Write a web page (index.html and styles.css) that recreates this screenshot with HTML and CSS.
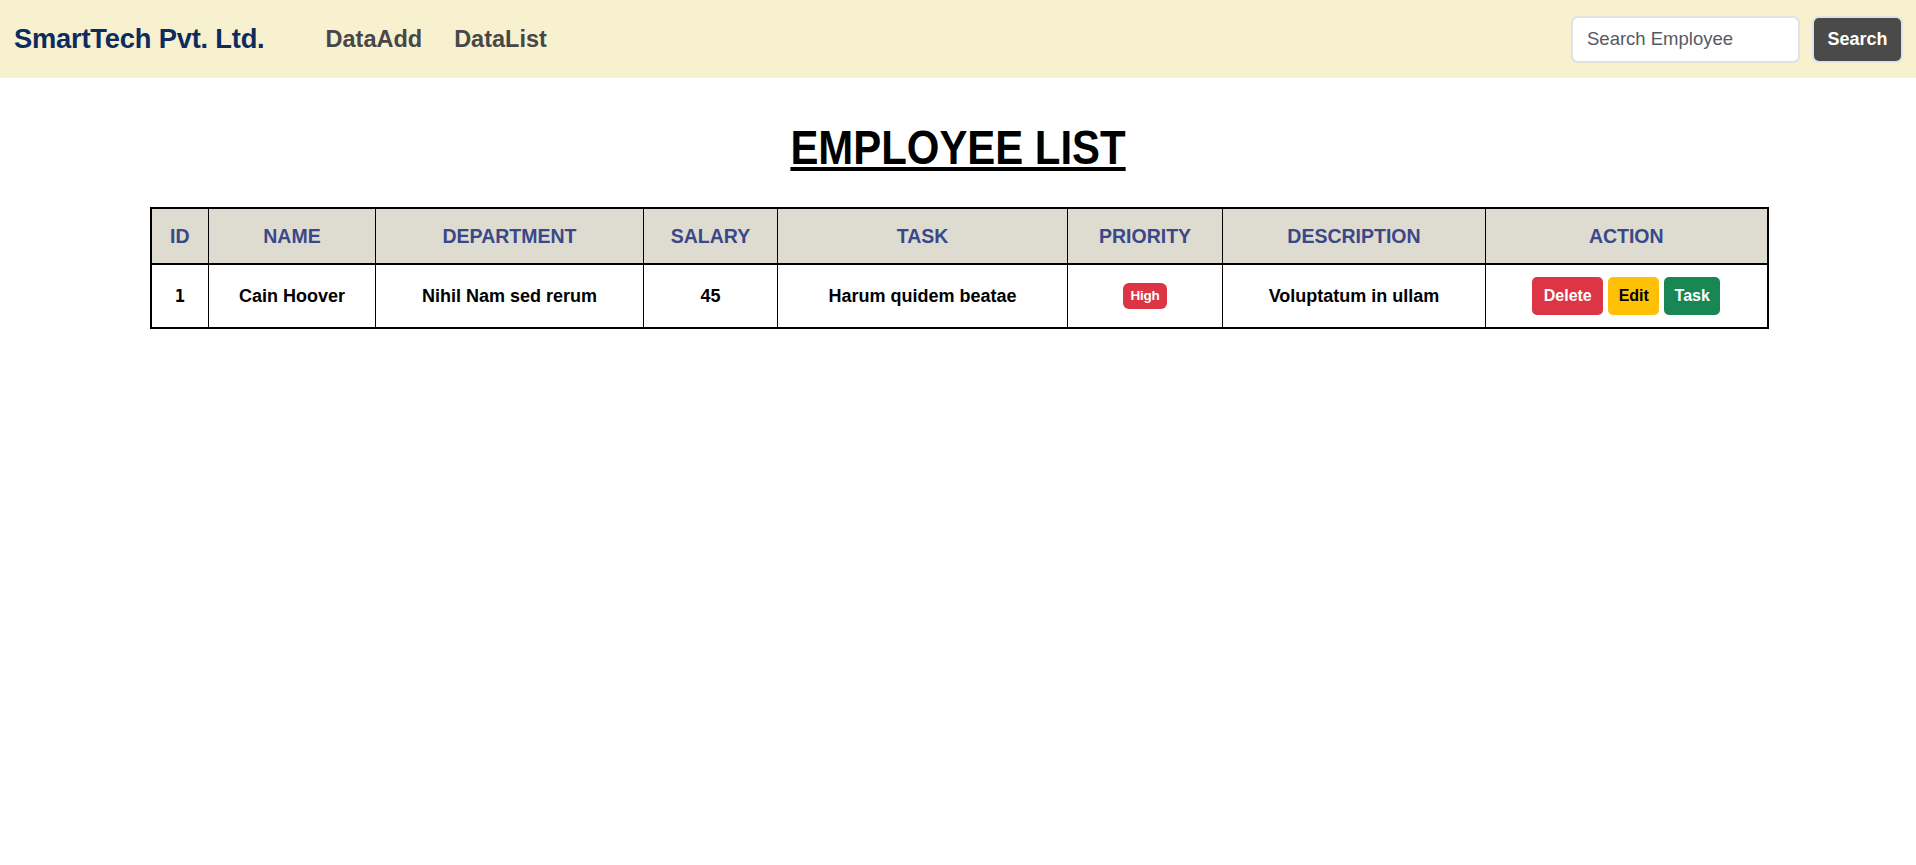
FILE: index.html
```html
<!DOCTYPE html>
<html lang="en">
<head>
<meta charset="utf-8">
<title>Employee List</title>
<link rel="stylesheet" href="styles.css">
</head>
<body>
<nav class="navbar">
  <div class="nav-left">
    <a class="brand" href="#">SmartTech Pvt. Ltd.</a>
    <ul class="nav-links">
      <li><a class="nav-link" href="#">DataAdd</a></li>
      <li><a class="nav-link" href="#">DataList</a></li>
    </ul>
  </div>
  <form class="search">
    <input class="search-input" type="text" placeholder="Search Employee">
    <button class="search-btn" type="button">Search</button>
  </form>
</nav>
<main class="content">
  <h1 class="title"><span class="title-text">EMPLOYEE LIST</span></h1>
  <table class="emp-table">
    <colgroup>
      <col class="c-id"><col class="c-name"><col class="c-dept"><col class="c-sal">
      <col class="c-task"><col class="c-pri"><col class="c-desc"><col class="c-act">
    </colgroup>
    <thead>
      <tr>
        <th>ID</th><th>NAME</th><th>DEPARTMENT</th><th>SALARY</th>
        <th>TASK</th><th>PRIORITY</th><th>DESCRIPTION</th><th>ACTION</th>
      </tr>
    </thead>
    <tbody>
      <tr>
        <td class="id">1</td>
        <td>Cain Hoover</td>
        <td>Nihil Nam sed rerum</td>
        <td>45</td>
        <td>Harum quidem beatae</td>
        <td><span class="badge">High</span></td>
        <td>Voluptatum in ullam</td>
        <td>
          <div class="actions">
            <button class="btn btn-delete" type="button">Delete</button>
            <button class="btn btn-edit" type="button">Edit</button>
            <button class="btn btn-task" type="button">Task</button>
          </div>
        </td>
      </tr>
    </tbody>
  </table>
</main>
</body>
</html>
```
FILE: styles.css
```css
* { box-sizing: border-box; }
body {
  margin: 0;
  font-family: "Liberation Sans", Arial, sans-serif;
  background: #fff;
  color: #000;
}
.navbar {
  height: 78px;
  background: #f7f1cf;
  display: flex;
  align-items: center;
  justify-content: space-between;
  padding: 0 13px 0 14px;
}
.nav-left {
  display: flex;
  align-items: center;
}
.brand {
  font-weight: bold;
  font-size: 27.3px;
  color: #0c2b5e;
  text-decoration: none;
  letter-spacing: -0.2px;
}
.nav-links {
  list-style: none;
  display: flex;
  gap: 32px;
  margin: 0 0 0 61px;
  padding: 0;
}
.nav-link {
  font-weight: bold;
  font-size: 23.5px;
  color: #474747;
  text-decoration: none;
}
.search {
  display: flex;
  gap: 12px;
  margin: 0;
}
.search-input {
  width: 229px;
  height: 47px;
  border: 2px solid #dfe2e6;
  border-radius: 7px;
  padding: 0 14px;
  font-family: "Liberation Sans", Arial, sans-serif;
  font-size: 18.5px;
  background: #fff;
}
.search-input::placeholder { color: #555a62; opacity: 1; }
.search-btn {
  width: 91px;
  height: 47px;
  border: 2px solid #dfe2e6;
  border-radius: 7px;
  background: #4a4a48;
  color: #fff;
  font-family: "Liberation Sans", Arial, sans-serif;
  font-weight: bold;
  font-size: 18px;
  padding: 0;
}
.content {
  display: flex;
  flex-direction: column;
  align-items: center;
}
.title {
  margin: 39px 0 30px;
  font-weight: bold;
  font-size: 49px;
  line-height: 60px;
}
.title-text {
  display: inline-block;
  transform: scaleX(0.855);
  text-decoration: underline;
  text-decoration-thickness: 4px;
  text-underline-offset: 3px;
}
.emp-table {
  width: 1617px;
  table-layout: fixed;
  border-collapse: collapse;
  border: 2px solid #000;
  text-align: center;
  margin-left: 2px;
}
.c-id { width: 58px; }
.c-name { width: 167px; }
.c-dept { width: 268px; }
.c-sal { width: 134px; }
.c-task { width: 290px; }
.c-pri { width: 155px; }
.c-desc { width: 263px; }
.c-act { width: 282px; }
.emp-table th,
.emp-table td {
  border: 1px solid #000;
  font-weight: bold;
  vertical-align: middle;
}
.emp-table th {
  background: #dedbd0;
  color: #3a4889;
  font-size: 19.5px;
  height: 56px;
  padding: 0 6px;
  border-bottom: 2px solid #000;
}
.emp-table td {
  font-size: 18px;
  height: 64px;
  padding: 0 6px;
}
.emp-table td.id { font-family: "DejaVu Sans Mono", monospace; font-size: 17px; }
.badge {
  display: inline-block;
  background: #dc3545;
  color: #fff;
  font-size: 13.5px;
  font-weight: bold;
  padding: 0 8px;
  height: 26px;
  line-height: 26px;
  border-radius: 6px;
  vertical-align: middle;
  letter-spacing: -0.3px;
}
.actions {
  display: flex;
  justify-content: center;
  gap: 5px;
}
.btn {
  height: 38px;
  border: none;
  border-radius: 5px;
  font-family: "Liberation Sans", Arial, sans-serif;
  font-weight: bold;
  font-size: 16px;
  padding: 0;
}
.btn-delete { background: #dc3545; color: #fff; width: 71px; }
.btn-edit { background: #ffc107; color: #000; width: 51px; }
.btn-task { background: #198754; color: #fff; width: 56px; }
```
